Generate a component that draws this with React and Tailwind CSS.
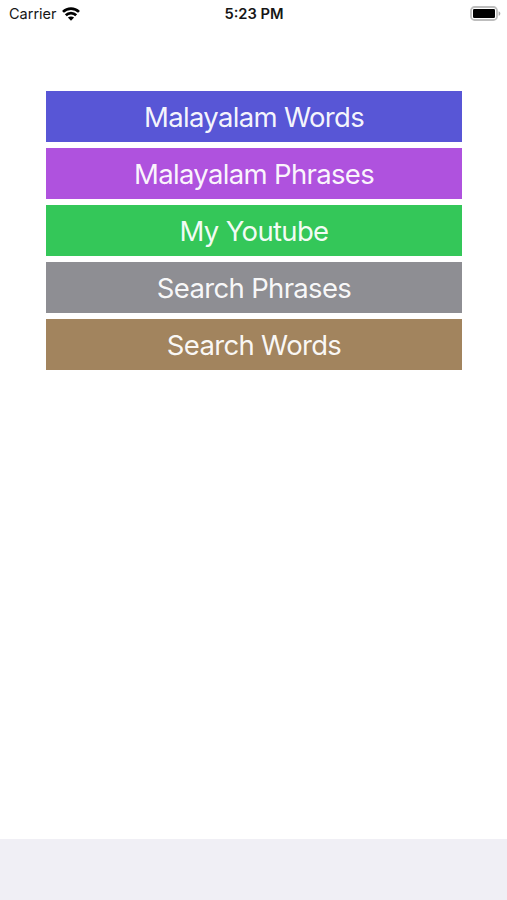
// App.jsx
// Home screen of the Malayalam learning app
import React from 'react';

const MENU = [
  { label: 'Malayalam Words', color: 'bg-[#5856d6]' },
  { label: 'Malayalam Phrases', color: 'bg-[#af52de]' },
  { label: 'My Youtube', color: 'bg-[#34c759]' },
  { label: 'Search Phrases', color: 'bg-[#8e8e93]' },
  { label: 'Search Words', color: 'bg-[#a2845e]' },
];

function WifiIcon() {
  return (
    <svg width="18" height="14" viewBox="0 0 18 14" fill="none" stroke="#000" strokeWidth="2.7">
      <path d="M1 4.9C5.5 0.5 12.5 0.5 17 4.9" />
      <path d="M3.8 8.2C6.7 5.3 11.3 5.3 14.2 8.2" />
      <path d="M5.9 10.6C7.6 9 10.4 9 12.1 10.6L9 13.7Z" fill="#000" stroke="none" />
    </svg>
  );
}

function BatteryIcon() {
  return (
    <svg width="31" height="15" viewBox="0 0 31 15">
      <rect x="1" y="1" width="26" height="13" rx="3.6" fill="#fff" stroke="#bdbdbd" strokeWidth="1.8" />
      <rect x="3" y="3" width="22" height="9" rx="1.2" fill="#000" />
      <path d="M28.6 5.2C30.9 6 30.9 9 28.6 9.8Z" fill="#a8a8a8" />
    </svg>
  );
}

function StatusBar() {
  return (
    <header className="grid h-[27px] grid-cols-3 items-center pl-[9px] pr-[6px] text-[#161616]">
      <div className="flex items-center gap-[5px]">
        <span className="pt-px text-[14.5px] leading-none">Carrier</span>
        <WifiIcon />
      </div>
      <span className="pr-[2px] pt-px text-center text-[14.7px] font-semibold leading-none">5:23 PM</span>
      <div className="flex justify-end">
        <BatteryIcon />
      </div>
    </header>
  );
}

export default function App() {
  return (
    <div className="flex h-[900px] w-[507px] flex-col overflow-hidden bg-white font-['Inter','Liberation_Sans',sans-serif]">
      <StatusBar />

      {/* ── MENU ── */}
      <main className="mt-16 flex flex-1 flex-col gap-[6px] pl-[46px] pr-[45px]">
        {MENU.map(({ label, color }) => (
          <button
            key={label}
            className={`h-[51px] w-full pt-px text-center text-[27.5px] leading-[50px] tracking-[-0.67px] text-white/95 ${color}`}
          >
            {label}
          </button>
        ))}
      </main>

      {/* ── BOTTOM BAR ── */}
      <footer className="h-[61px] bg-[#f0eff5]" />
    </div>
  );
}
